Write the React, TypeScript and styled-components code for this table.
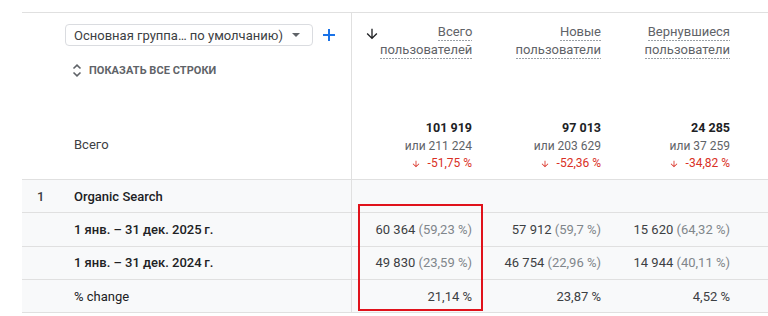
import styled, { createGlobalStyle } from 'styled-components'

const COLS = '52px 277px 129px 129px 129px 1fr'

type Metric = {
    title: string[]
    total: string
    prev: string
    change: string
    sorted?: boolean
}

type Cell = { value: string; share?: string }

type DataRow = {
    index?: string
    label: string
    weight: number
    cells: Cell[]
}

const metrics: Metric[] = [
    {
        title: ['Всего', 'пользователей'],
        total: '101\u00a0919',
        prev: 'или 211\u00a0224',
        change: '-51,75 %',
        sorted: true,
    },
    {
        title: ['Новые', 'пользователи'],
        total: '97\u00a0013',
        prev: 'или 203\u00a0629',
        change: '-52,36 %',
    },
    {
        title: ['Вернувшиеся', 'пользователи'],
        total: '24\u00a0285',
        prev: 'или 37\u00a0259',
        change: '-34,82 %',
    },
]

const rows: DataRow[] = [
    { index: '1', label: 'Organic Search', weight: 500, cells: [] },
    {
        label: '1 янв. – 31 дек. 2025\u2009г.',
        weight: 500,
        cells: [
            { value: '60\u00a0364', share: '(59,23 %)' },
            { value: '57\u00a0912', share: '(59,7 %)' },
            { value: '15\u00a0620', share: '(64,32 %)' },
        ],
    },
    {
        label: '1 янв. – 31 дек. 2024\u2009г.',
        weight: 500,
        cells: [
            { value: '49\u00a0830', share: '(23,59 %)' },
            { value: '46\u00a0754', share: '(22,96 %)' },
            { value: '14\u00a0944', share: '(40,11 %)' },
        ],
    },
    {
        label: '% change',
        weight: 400,
        cells: [{ value: '21,14 %' }, { value: '23,87 %' }, { value: '4,52 %' }],
    },
]

function ArrowDown({ size, color }: { size: number; color: string }) {
    return (
        <svg width={size} height={size} viewBox="0 0 24 24">
            <path
                fill={color}
                d="M20 12l-1.41-1.41L13 16.17V4h-2v12.17l-5.58-5.59L4 12l8 8 8-8z"
            />
        </svg>
    )
}

export default function App() {
    return (
        <>
            <GlobalStyle />
            <Page>
                <Table>
                    <HeaderRow>
                        <HeadLeft>
                            <Controls>
                                <Dropdown>
                                    <span>Основная группа… по умолчанию)</span>
                                    <Caret />
                                </Dropdown>
                                <svg width="14" height="14" viewBox="0 0 14 14">
                                    <path
                                        d="M7 1v12M1 7h12"
                                        stroke="#1a73e8"
                                        strokeWidth="2"
                                    />
                                </svg>
                            </Controls>
                            <ShowAll>
                                <svg width="10" height="13" viewBox="0 0 10 13">
                                    <path
                                        d="M1.5 4.5L5 1.2l3.5 3.3M1.5 8.5L5 11.8l3.5-3.3"
                                        stroke="#5f6368"
                                        strokeWidth="1.6"
                                        fill="none"
                                    />
                                </svg>
                                <span>Показать все строки</span>
                            </ShowAll>
                            <TotalLabel>Всего</TotalLabel>
                        </HeadLeft>
                        {metrics.map((m, i) => (
                            <MetricHead key={m.title[0]} $first={i === 0}>
                                <HeadTop>
                                    <SortIcon>
                                        {m.sorted && (
                                            <ArrowDown size={16} color="#202124" />
                                        )}
                                    </SortIcon>
                                    <Title>
                                        {m.title.map((line) => (
                                            <TitleLine key={line}>{line}</TitleLine>
                                        ))}
                                    </Title>
                                </HeadTop>
                                <Totals>
                                    <TotalValue>{m.total}</TotalValue>
                                    <TotalPrev>{m.prev}</TotalPrev>
                                    <TotalChange>
                                        <ArrowDown size={10} color="#d93025" />
                                        <span>{m.change}</span>
                                    </TotalChange>
                                </Totals>
                            </MetricHead>
                        ))}
                        <div />
                    </HeaderRow>
                    {rows.map((r) => (
                        <Row key={r.label}>
                            <IndexCell>{r.index}</IndexCell>
                            <LabelCell $weight={r.weight}>{r.label}</LabelCell>
                            {[0, 1, 2].map((i) => {
                                const c = r.cells[i]
                                return (
                                    <ValueCell key={i} $first={i === 0}>
                                        {c && (
                                            <>
                                                {c.value}
                                                {c.share && <Share> {c.share}</Share>}
                                            </>
                                        )}
                                    </ValueCell>
                                )
                            })}
                            <div />
                        </Row>
                    ))}
                    <Highlight />
                </Table>
            </Page>
        </>
    )
}

const GlobalStyle = createGlobalStyle`
    html, body {
        margin: 0;
        background: #fff;
    }

    body {
        font-family: Roboto, 'Liberation Sans', sans-serif;
        color: #202124;
    }
`

const Page = styled.div`
    width: 768px;
    height: 316px;
    overflow: hidden;
    padding-top: 12px;
    box-sizing: border-box;
`

const Table = styled.div`
    position: relative;
    margin-left: 22px;
`

const HeaderRow = styled.div`
    display: grid;
    grid-template-columns: ${COLS};
    height: 168px;
    box-sizing: border-box;
    border-top: 1px solid #e0e0e0;
    border-bottom: 1px solid #e0e0e0;
`

const HeadLeft = styled.div`
    grid-column: span 2;
    display: flex;
    flex-direction: column;
    padding: 11px 0 0 43px;
`

const Controls = styled.div`
    display: flex;
    align-items: center;
    gap: 9px;
`

const Dropdown = styled.div`
    width: 248px;
    height: 22px;
    box-sizing: border-box;
    display: flex;
    align-items: center;
    justify-content: space-between;
    padding: 0 12px 0 8px;
    border: 1px solid #dadce0;
    border-radius: 4px;
    font-size: 13px;
    color: #3c4043;
`

const Caret = styled.span`
    width: 0;
    height: 0;
    border-left: 4px solid transparent;
    border-right: 4px solid transparent;
    border-top: 4px solid #5f6368;
`

const ShowAll = styled.div`
    display: flex;
    align-items: center;
    gap: 7px;
    margin: 18px 0 0 7px;
    font-size: 11px;
    font-weight: 700;
    letter-spacing: 0.05px;
    text-transform: uppercase;
    color: #5f6368;
`

const TotalLabel = styled.div`
    margin-top: auto;
    padding: 0 0 25px 9px;
    font-size: 13px;
    line-height: 18px;
    color: #3c4043;
`

const MetricHead = styled.div<{ $first: boolean }>`
    display: flex;
    flex-direction: column;
    justify-content: space-between;
    padding: 10px 8px 7px 0;
    border-left: ${({ $first }) => ($first ? '1px solid #e0e0e0' : 'none')};
`

const HeadTop = styled.div`
    display: flex;
    justify-content: space-between;
    align-items: flex-start;
`

const SortIcon = styled.span`
    display: flex;
    padding: 3px 0 0 12px;
`

const Title = styled.div`
    display: flex;
    flex-direction: column;
    align-items: flex-end;
`

const TitleLine = styled.span`
    font-size: 13px;
    line-height: 18px;
    color: #5f6368;
    background-image: linear-gradient(to right, #9aa0a6 60%, transparent 60%);
    background-size: 3px 1px;
    background-repeat: repeat-x;
    background-position: left bottom;
`

const Totals = styled.div`
    display: flex;
    flex-direction: column;
    align-items: flex-end;
`

const TotalValue = styled.span`
    font-size: 12.5px;
    font-weight: 700;
    line-height: 19px;
    color: #202124;
`

const TotalPrev = styled.span`
    font-size: 12px;
    line-height: 18px;
    color: #5f6368;
`

const TotalChange = styled.span`
    display: flex;
    align-items: center;
    gap: 7px;
    font-size: 12px;
    line-height: 17px;
    color: #d93025;
`

const Row = styled.div`
    display: grid;
    grid-template-columns: ${COLS};
    height: 33.33px;
    box-sizing: border-box;
    border-bottom: 1px solid #e0e0e0;
    background: #f8f9fa;
    font-size: 13px;
    align-items: center;
`

const IndexCell = styled.div`
    padding-left: 15px;
    font-weight: 500;
    color: #3c4043;
`

const LabelCell = styled.div<{ $weight: number }>`
    font-weight: ${({ $weight }) => $weight};
    color: #202124;
`

const ValueCell = styled.div<{ $first: boolean }>`
    height: 100%;
    display: flex;
    align-items: center;
    justify-content: flex-end;
    white-space: pre;
    padding-right: 8px;
    color: #3c4043;
    border-left: ${({ $first }) => ($first ? '1px solid #e0e0e0' : 'none')};
`

const Share = styled.span`
    color: #80868b;
`

const Highlight = styled.div`
    position: absolute;
    left: 336px;
    top: 192px;
    width: 125px;
    height: 107px;
    box-sizing: border-box;
    border: 2px solid #e0121b;
    pointer-events: none;
`
